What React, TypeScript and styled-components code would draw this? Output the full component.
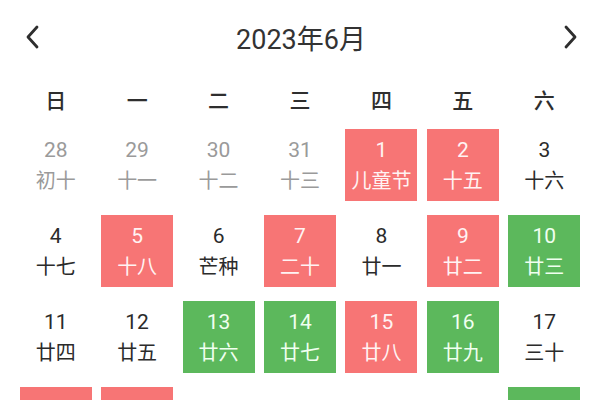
import React from "react";
import styled, { createGlobalStyle } from "styled-components";

const Global = createGlobalStyle`
  html, body { margin: 0; padding: 0; background: #ffffff; }
  body { font-family: Roboto, "Noto Sans CJK SC", sans-serif; overflow: hidden; }
`;

const Page = styled.div`
  width: 600px;
  height: 400px;
  overflow: hidden;
  background: #fff;
`;

const Header = styled.div`
  height: 74px;
  display: flex;
  align-items: center;
  justify-content: space-between;
  padding: 0 22px 0 24px;
`;

const Title = styled.div`
  font-size: 27px;
  color: #333;
`;

const NavBtn = styled.div`
  width: 16px;
  height: 26px;
  display: flex;
  align-items: center;
  justify-content: center;
`;

const Weekdays = styled.div`
  display: grid;
  grid-template-columns: repeat(7, 1fr);
  padding: 0 15px;
  height: 50px;
  align-items: center;
  justify-items: center;
`;

const Weekday = styled.div`
  font-size: 21px;
  font-weight: 500;
  color: #2e2e2e;
`;

const Grid = styled.div`
  display: grid;
  grid-template-columns: repeat(7, 1fr);
  padding: 5px 15px 0;
  row-gap: 14px;
  justify-items: center;
`;

type Kind = "plain" | "muted" | "red" | "green";

const bg: Record<Kind, string> = {
  plain: "transparent",
  muted: "transparent",
  red: "#f77575",
  green: "#5cb85c",
};
const fg: Record<Kind, string> = {
  plain: "#2b2b2b",
  muted: "#9a9a9a",
  red: "#fff3f3",
  green: "#f0fff0",
};

const Cell = styled.div<{ $kind: Kind }>`
  width: 72px;
  height: 72px;
  background: ${(p) => bg[p.$kind]};
  color: ${(p) => fg[p.$kind]};
  display: flex;
  flex-direction: column;
  align-items: center;
  justify-content: center;
  font-size: 20px;
  line-height: 29px;
`;

const Num = styled.div`
  font-size: 21px;
`;

const Lunar = styled.div`
  font-size: 20px;
  font-family: "Noto Sans CJK SC", sans-serif;
`;

const days: [string, string, Kind][] = [
  ["28", "初十", "muted"],
  ["29", "十一", "muted"],
  ["30", "十二", "muted"],
  ["31", "十三", "muted"],
  ["1", "儿童节", "red"],
  ["2", "十五", "red"],
  ["3", "十六", "plain"],
  ["4", "十七", "plain"],
  ["5", "十八", "red"],
  ["6", "芒种", "plain"],
  ["7", "二十", "red"],
  ["8", "廿一", "plain"],
  ["9", "廿二", "red"],
  ["10", "廿三", "green"],
  ["11", "廿四", "plain"],
  ["12", "廿五", "plain"],
  ["13", "廿六", "green"],
  ["14", "廿七", "green"],
  ["15", "廿八", "red"],
  ["16", "廿九", "green"],
  ["17", "三十", "plain"],
  ["18", "初一", "red"],
  ["19", "初二", "red"],
  ["20", "初三", "plain"],
  ["21", "夏至", "plain"],
  ["22", "端午节", "plain"],
  ["23", "初六", "plain"],
  ["24", "初七", "green"],
];

const weekdays = ["日", "一", "二", "三", "四", "五", "六"];

const Chevron = ({ dir }: { dir: "left" | "right" }) => (
  <svg width="15" height="24" viewBox="0 0 15 24">
    <polyline
      points={dir === "left" ? "12,2 3,12 12,22" : "3,2 12,12 3,22"}
      fill="none"
      stroke="#2e2e2e"
      strokeWidth="2.8"
      strokeLinecap="round"
      strokeLinejoin="round"
    />
  </svg>
);

export default function App() {
  return (
    <Page>
      <Global />
      <Header>
        <NavBtn>
          <Chevron dir="left" />
        </NavBtn>
        <Title>2023年6月</Title>
        <NavBtn>
          <Chevron dir="right" />
        </NavBtn>
      </Header>
      <Weekdays>
        {weekdays.map((w) => (
          <Weekday key={w}>{w}</Weekday>
        ))}
      </Weekdays>
      <Grid>
        {days.map(([n, l, k]) => (
          <Cell key={n + l} $kind={k}>
            <Num>{n}</Num>
            <Lunar>{l}</Lunar>
          </Cell>
        ))}
      </Grid>
    </Page>
  );
}
